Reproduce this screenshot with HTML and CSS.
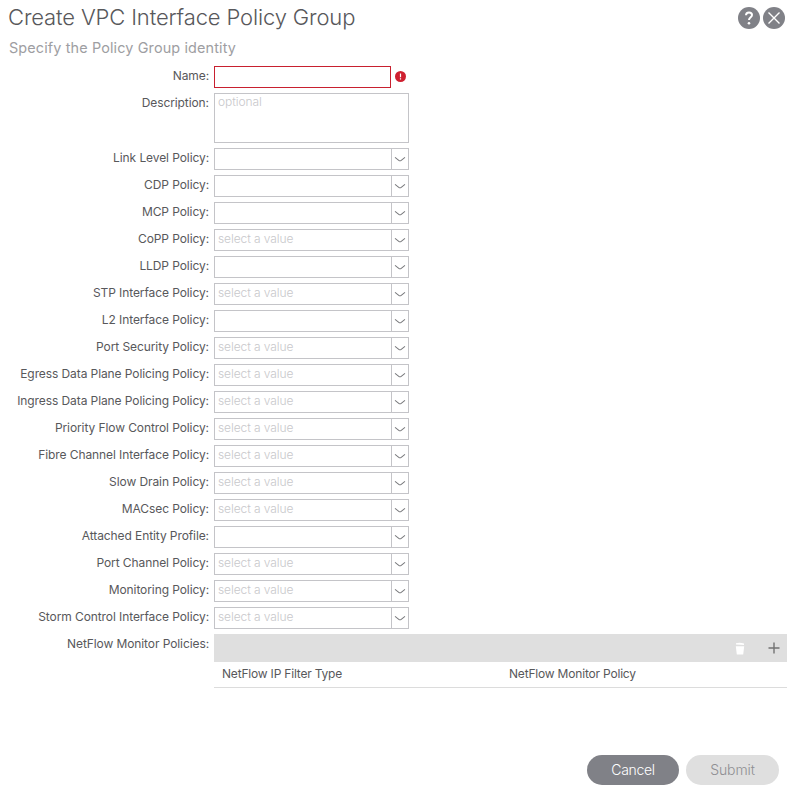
FILE: index.html
```
<!DOCTYPE html>
<html lang="en">
<head>
<meta charset="utf-8">
<title>Create VPC Interface Policy Group</title>
<link rel="stylesheet" href="styles.css">
</head>
<body>
<svg width="0" height="0" class="defs"><symbol id="chev" viewBox="0 0 17 20"><path d="M3.2 8.3L7.2 11.5Q8.5 12.4 9.8 11.5L13.8 8.3" fill="none" stroke="#77787b" stroke-width="1.1"/></symbol></svg>
<main class="dialog">
<header class="head">
<h1>Create VPC Interface Policy Group</h1>
<div class="tools">
<svg width="22" height="22" viewBox="0 0 22 22"><circle cx="11" cy="11" r="11" fill="#808187"/><path d="M8 8.2C8 6.3 9.2 5.4 11 5.4s3 1 3 2.6c0 2.2-3 2.2-3 5" fill="none" stroke="#fff" stroke-width="2"/><circle cx="11" cy="16.2" r="1.3" fill="#fff"/></svg>
<svg width="22" height="22" viewBox="0 0 22 22"><circle cx="11" cy="11" r="11" fill="#808187"/><path d="M5.5 5.5l11 11M16.5 5.5l-11 11" stroke="#fff" stroke-width="1.4"/></svg>
</div>
</header>
<h2>Specify the Policy Group identity</h2>
<section class="form">
<div class="row"><label>Name:</label><div class="field error"></div><svg class="alert" width="11" height="11" viewBox="0 0 11 11"><circle cx="5.5" cy="5.5" r="5.5" fill="#cf2030"/><path d="M5.5 2.5v3.7M5.5 7.2v1.2" stroke="#fff" stroke-width="1.2"/></svg></div>
<div class="row"><label>Description:</label><div class="field area">optional</div></div>
<div class="row"><label>Link Level Policy:</label><div class="field"><svg><use href="#chev"/></svg></div></div>
<div class="row"><label>CDP Policy:</label><div class="field"><svg><use href="#chev"/></svg></div></div>
<div class="row"><label>MCP Policy:</label><div class="field"><svg><use href="#chev"/></svg></div></div>
<div class="row"><label>CoPP Policy:</label><div class="field">select a value<svg><use href="#chev"/></svg></div></div>
<div class="row"><label>LLDP Policy:</label><div class="field"><svg><use href="#chev"/></svg></div></div>
<div class="row"><label>STP Interface Policy:</label><div class="field">select a value<svg><use href="#chev"/></svg></div></div>
<div class="row"><label>L2 Interface Policy:</label><div class="field"><svg><use href="#chev"/></svg></div></div>
<div class="row"><label>Port Security Policy:</label><div class="field">select a value<svg><use href="#chev"/></svg></div></div>
<div class="row"><label>Egress Data Plane Policing Policy:</label><div class="field">select a value<svg><use href="#chev"/></svg></div></div>
<div class="row"><label>Ingress Data Plane Policing Policy:</label><div class="field">select a value<svg><use href="#chev"/></svg></div></div>
<div class="row"><label>Priority Flow Control Policy:</label><div class="field">select a value<svg><use href="#chev"/></svg></div></div>
<div class="row"><label>Fibre Channel Interface Policy:</label><div class="field">select a value<svg><use href="#chev"/></svg></div></div>
<div class="row"><label>Slow Drain Policy:</label><div class="field">select a value<svg><use href="#chev"/></svg></div></div>
<div class="row"><label>MACsec Policy:</label><div class="field">select a value<svg><use href="#chev"/></svg></div></div>
<div class="row"><label>Attached Entity Profile:</label><div class="field"><svg><use href="#chev"/></svg></div></div>
<div class="row"><label>Port Channel Policy:</label><div class="field">select a value<svg><use href="#chev"/></svg></div></div>
<div class="row"><label>Monitoring Policy:</label><div class="field">select a value<svg><use href="#chev"/></svg></div></div>
<div class="row"><label>Storm Control Interface Policy:</label><div class="field">select a value<svg><use href="#chev"/></svg></div></div>
<div class="row"><label>NetFlow Monitor Policies:</label>
<div class="grid">
<div class="bar">
<svg width="10" height="13" viewBox="0 0 10 13"><path d="M1 1.2Q5 .2 9 1.5V3L1 2.4zM.8 4.2h8.4L8.2 12.5H1.8z" fill="#fff"/></svg>
<svg width="12" height="12" viewBox="0 0 12 12"><path d="M6 .5v11M.5 6h11" stroke="#737373" stroke-width="1.4"/></svg>
</div>
<div class="cols"><span>NetFlow IP Filter Type</span><span>NetFlow Monitor Policy</span></div>
</div></div>
</section>
<footer><button class="cancel">Cancel</button><button class="submit">Submit</button></footer>
</main>
</body>
</html>
```
FILE: styles.css
```
* { box-sizing: border-box; }
body { margin: 0; background: #fff; color: #58585b; font-family: Inter, "Liberation Sans", sans-serif; font-size: 12px; }
.defs { position: absolute; }
.dialog { display: flex; flex-direction: column; height: 795px; padding: 7px 8px 10px 0; }
.head { display: flex; justify-content: space-between; height: 30px; padding-left: 8px; }
h1 { margin: -3px 0 0; font-size: 22px; line-height: 26px; font-weight: 300; letter-spacing: -.14px; white-space: nowrap; }
.tools { display: flex; gap: 3px; margin-right: 2px; }
h2 { margin: 1px 0 0 9px; height: 28px; font-size: 14.4px; line-height: 20px; font-weight: 400; letter-spacing: .14px; color: #9e9ea2; }
.form { display: flex; flex-direction: column; gap: 5px; flex: 1; }
.row { display: flex; align-items: flex-start; }
label { width: 209px; margin-right: 5px; text-align: right; line-height: 20px; letter-spacing: -.09px; white-space: nowrap; }
.field { display: flex; justify-content: space-between; width: 195px; height: 22px; padding-left: 3px; border: 1px solid #c4c4c8; color: #c8c8cb; line-height: 18px; font-weight: 300; letter-spacing: -.08px; }
.field svg { width: 17px; height: 20px; margin-left: auto; border-left: 1px solid #c4c4c8; }
.field.area { height: 50px; line-height: 16px; }
.field.error { width: 177px; border-color: #c8202f; }
.alert { margin: 5px 0 0 4px; }
.grid { width: 573px; }
.bar { display: flex; justify-content: flex-end; align-items: center; gap: 23px; height: 28px; padding-right: 7px; background: #dfdfdf; }
.cols { display: grid; grid-template-columns: 287px 1fr; height: 26px; padding-left: 8px; line-height: 24px; letter-spacing: -.19px; border-bottom: 1px solid #dcdcdc; }
footer { display: flex; justify-content: flex-end; gap: 7px; padding-right: 8px; }
button { width: 93px; height: 30px; padding: 0 0 2px; border: 0; border-radius: 15px; font: 300 14px Inter, sans-serif; letter-spacing: -.1px; }
.cancel { width: 92px; background: #808187; color: #fff; letter-spacing: -.3px; }
.submit { background: #dfdfdf; color: #8f8f93; }
```
